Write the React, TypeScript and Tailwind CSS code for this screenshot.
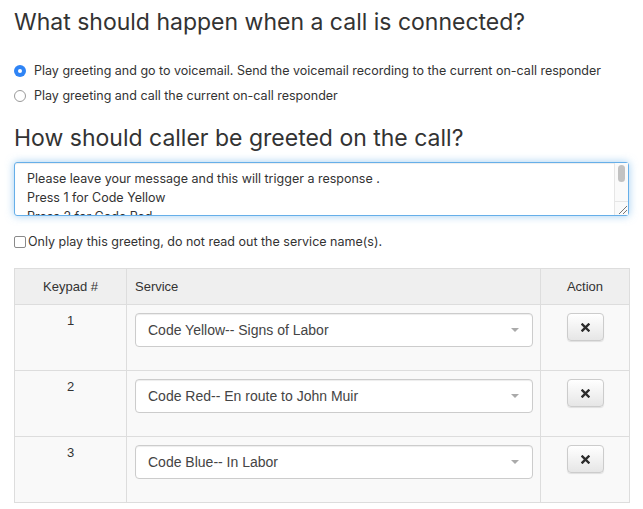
import React from "react";

const rows = [
  { n: "1", s: "Code Yellow-- Signs of Labor" },
  { n: "2", s: "Code Red-- En route to John Muir" },
  { n: "3", s: "Code Blue-- In Labor" },
];

function XIcon() {
  return (
    <svg width="9" height="9" viewBox="0 0 9 9">
      <path d="M1.5 1.5 L7.5 7.5 M7.5 1.5 L1.5 7.5" stroke="#2b2b2b" strokeWidth="2.4" strokeLinecap="square" />
    </svg>
  );
}

export default function App() {
  return (
    <div className="w-[643px] h-[509px] overflow-hidden bg-white pl-[14px] pr-[14px] text-[#333] font-['Inter',sans-serif]">
      <h1 className="pt-[7px] text-[23px] leading-[30px] font-normal">
        What should happen when a call is connected?
      </h1>
      <div className="mt-[25px] flex flex-col gap-[7px] text-[12.5px] leading-[18px]">
        <label className="flex items-center gap-[8px]">
          <span className="w-[12px] h-[12px] rounded-full bg-[#2f84f5] flex items-center justify-center">
            <span className="w-[4px] h-[4px] rounded-full bg-white" />
          </span>
          <span>Play greeting and go to voicemail. Send the voicemail recording to the current on-call responder</span>
        </label>
        <label className="flex items-center gap-[8px]">
          <span className="w-[12px] h-[12px] rounded-full border border-[#9a9a9a] bg-white" />
          <span>Play greeting and call the current on-call responder</span>
        </label>
      </div>
      <h2 className="mt-[18px] text-[23px] leading-[30px] font-normal">How should caller be greeted on the call?</h2>
      <div className="relative mt-[9px] w-[615px] h-[54px]">
        <textarea
          className="block w-full h-full resize-none overflow-hidden rounded-[3px] border border-[#66afe9] pl-[12px] pr-[24px] py-[6px] text-[12.5px] leading-[19px] text-[#333] outline-none shadow-[inset_0_1px_1px_rgba(0,0,0,0.075),0_0_8px_rgba(102,175,233,0.6)] font-['Inter',sans-serif]"
          defaultValue={"Please leave your message and this will trigger a response .\nPress 1 for Code Yellow\nPress 2 for Code Red\nPress 3 for Code Blue"}
        />
        <div className="absolute right-[1px] top-[1px] bottom-[1px] w-[14px] bg-[#fafafa] border-l border-[#e6e6e6] flex flex-col">
          <div className="flex-1 pt-[2px] flex justify-center">
            <div className="w-[7px] h-[17px] rounded-[4px] bg-[#c2c2c2]" />
          </div>
          <div className="h-[14px] border-t border-[#e6e6e6] relative">
            <svg width="13" height="13" viewBox="0 0 13 13" className="absolute right-0 bottom-0">
              <path d="M4 12 L12 4 M8 12 L12 8" stroke="#777" strokeWidth="1" />
            </svg>
          </div>
        </div>
      </div>
      <label className="mt-[18px] flex items-center text-[12.5px] leading-[16px]">
        <span className="w-[12px] h-[12px] rounded-[2px] border border-[#8a8a8a] bg-white mr-[2px]" />
        <span>Only play this greeting, do not read out the service name(s).</span>
      </label>
      <table className="mt-[18px] w-[615px] border-collapse border border-[#ddd] table-fixed font-['Liberation_Sans',Arial,sans-serif] text-[13px] text-[#333]">
        <colgroup>
          <col className="w-[112px]" />
          <col className="w-[414px]" />
          <col className="w-[89px]" />
        </colgroup>
        <thead>
          <tr className="bg-[#efefef] h-[36px]">
            <th className="border border-[#ddd] font-normal text-center align-middle">Keypad #</th>
            <th className="border border-[#ddd] font-normal text-left pl-[8px] align-middle">Service</th>
            <th className="border border-[#ddd] font-normal text-center align-middle">Action</th>
          </tr>
        </thead>
        <tbody>
          {rows.map((r) => (
            <tr key={r.n} className="bg-[#f9f9f9] h-[66px]">
              <td className="border border-[#ddd] text-center align-top pt-[7px] leading-[18px]">{r.n}</td>
              <td className="border border-[#ddd] align-top pt-[8px] pl-[8px] pr-[7px]">
                <div className="h-[34px] w-full rounded-[4px] border border-[#ccc] bg-white flex items-center justify-between pl-[12px] pr-[13px] text-[14px] text-[#444] shadow-[inset_0_1px_1px_rgba(0,0,0,0.075)]">
                  <span>{r.s}</span>
                  <span className="w-0 h-0 border-l-[4px] border-r-[4px] border-t-[4px] border-l-transparent border-r-transparent border-t-[#aaa]" />
                </div>
              </td>
              <td className="border border-[#ddd] align-top pt-[8px]">
                <div className="flex justify-center">
                  <button className="w-[37px] h-[28px] rounded-[4px] border border-[#ccc] bg-gradient-to-b from-white to-[#e6e6e6] shadow-[0_1px_1px_rgba(0,0,0,0.1)] flex items-center justify-center">
                    <XIcon />
                  </button>
                </div>
              </td>
            </tr>
          ))}
        </tbody>
      </table>
    </div>
  );
}
